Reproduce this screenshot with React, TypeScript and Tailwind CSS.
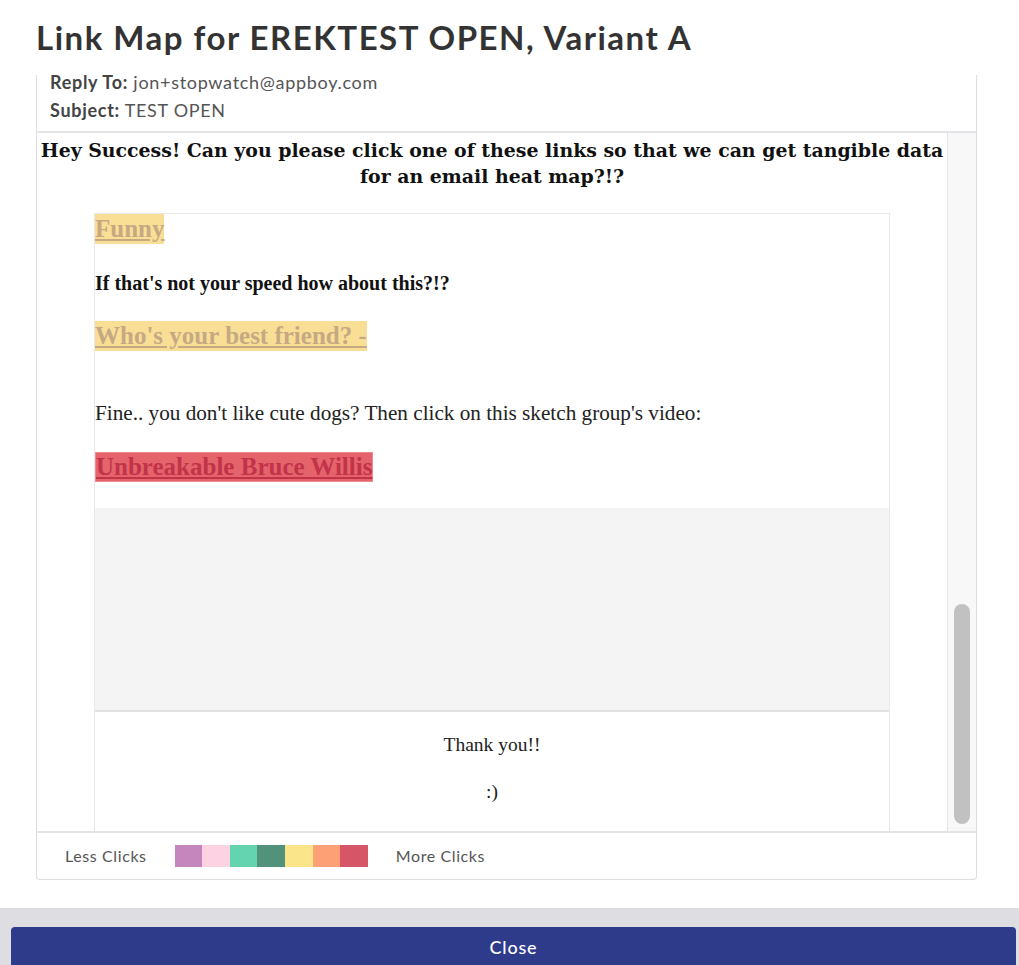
import React from "react";

const swatches = ["#c585bd", "#fdd3e3", "#64d3af", "#52927a", "#fae58a", "#fda075", "#d65668"];

export default function App() {
  return (
    <div className="w-[1019px] h-[965px] bg-white overflow-hidden" style={{ fontFamily: "Lato, 'Open Sans', sans-serif" }}>
      <div className="h-[75px] flex items-center px-[36px] pb-[1px]">
        <h1 className="text-[33px] font-bold text-[#333333] leading-none tracking-[1.5px]">Link Map for EREKTEST OPEN, Variant A</h1>
      </div>
      <div className="mx-[36px] w-[941px] border-x border-b border-[#dddde2] rounded-b-[4px] flex flex-col">
        <div className="h-[58px] border-b-2 border-[#e4e4e8]">
          <div className="-mt-[7px] px-[13px] text-[18px] tracking-[0.7px] text-[#555] leading-[28px]">
            <div><span className="font-bold text-[#444]">Reply To:</span> jon+stopwatch@appboy.com</div>
            <div><span className="font-bold text-[#444]">Subject:</span> TEST OPEN</div>
          </div>
        </div>
        <div className="flex h-[698px]">
          <div className="flex-1 overflow-hidden border-r border-[#e4e4e8] bg-white" style={{ fontFamily: "'Liberation Serif', 'Times New Roman', serif" }}>
            <div className="pt-[4px] text-center font-bold text-[#111] leading-[26px]" style={{ fontFamily: "'DejaVu Serif', Georgia, serif", fontSize: "18.9px" }}>
              Hey Success! Can you please click one of these links so that we can get tangible data<br />for an email heat map?!?
            </div>
            <div className="mx-auto mt-[24px] w-[796px] border-l border-t border-r border-[#e8e8e8]">
              <div className="h-[30px]">
                <span className="inline-block bg-[#f9df96] text-[#c6a983] underline font-bold text-[25px] leading-[30px]">Funny</span>
              </div>
              <div className="mt-[27px] text-[20px] font-bold text-[#111] leading-[24px]">If that's not your speed how about this?!?</div>
              <div className="mt-[26px] h-[30px]">
                <span className="inline-block bg-[#f9df96] text-[#c6a983] underline font-bold text-[25px] leading-[30px]">Who's your best friend? -</span>
              </div>
              <div className="mt-[49px] text-[21.2px] text-[#222] leading-[26px]">Fine.. you don't like cute dogs? Then click on this sketch group's video:</div>
              <div className="mt-[26px] h-[30px]">
                <span className="inline-block bg-[#e5646c] text-[#c2334a] underline font-bold text-[25px] leading-[28px] border border-[#f08a90]">Unbreakable Bruce Willis</span>
              </div>
              <div className="mt-[26px] h-[202px] bg-[#f4f4f4]"></div>
              <div className="border-t-2 border-[#e2e2e2] text-center text-[19.5px] text-[#222]">
                <div className="pt-[21px] leading-[24px]">Thank you!!</div>
                <div className="mt-[23px] leading-[24px]">:)</div>
                <div className="h-[60px]"></div>
              </div>
            </div>
          </div>
          <div className="w-[28px] bg-[#f8f8f8] flex flex-col items-center">
            <div className="mt-[471px] w-[16px] h-[220px] rounded-full bg-[#c1c1c1]"></div>
          </div>
        </div>
        <div className="h-[48px] border-t-2 border-[#e4e4e8] flex items-center text-[16px] tracking-[0.6px] text-[#555]">
          <span className="ml-[28px]">Less Clicks</span>
          <div className="ml-[28px] flex h-[22px]">
            {swatches.map((c) => (
              <div key={c} className="w-[27.6px] h-[22px]" style={{ backgroundColor: c }}></div>
            ))}
          </div>
          <span className="ml-[28px]">More Clicks</span>
        </div>
      </div>
      <div className="mt-[28px] h-[58px] bg-[#dedde2] pt-[19px] pl-[11px] pr-[3px]">
        <div className="h-[40px] bg-[#2e3a8a] rounded-t-[4px] flex justify-center pt-[8px]">
          <span className="text-white text-[18px] tracking-[0.8px] font-medium leading-[24px]">Close</span>
        </div>
      </div>
    </div>
  );
}
